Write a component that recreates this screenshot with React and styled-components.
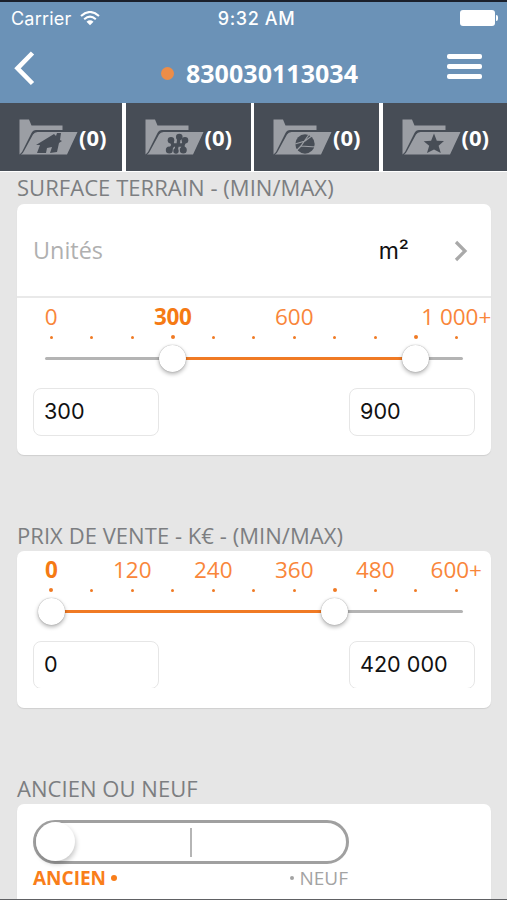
import { useState } from "react";
import styled, { createGlobalStyle } from "styled-components";

const tabs = ["house", "people", "ball", "star"];

const surfaceLabels = { 0: "0", 3: "300", 6: "600", 10: "1 000+" };
const priceLabels = {
  0: "0",
  2: "120",
  4: "240",
  6: "360",
  8: "480",
  10: "600+",
};

const glyphs = {
  house: (
    <path d="M17 26 L35 15 L37 17 L38 14 L42 14 L41 21 L43 22 L40 24 L38 33 L31 34 L33 28 L28 29 L27 34 L18 34 L21 26 Z" />
  ),
  people: (
    <>
      <circle cx="34.3" cy="18" r="3.3" />
      <circle cx="26" cy="21.3" r="3.3" />
      <circle cx="40" cy="21.3" r="3.3" />
      <circle cx="24.3" cy="31" r="3.5" />
      <circle cx="31" cy="32" r="2.7" />
      <circle cx="38.3" cy="31" r="3.5" />
      <path
        d="M34 18 L33 27 M26 21 L28 26 L25 31 M40 21 L38 26 L38 31 M28 26 H37 M32 27 L31 32"
        fill="none"
        stroke="#474d56"
        strokeWidth="3.4"
      />
    </>
  ),
  ball: (
    <>
      <circle cx="32" cy="25" r="9.7" />
      <path
        d="M22 25 L32 22 L40 16 M37 14 L28 27 L43 28 M28 27 L23 32"
        fill="none"
        stroke="#9b9ea4"
        strokeWidth="1.2"
      />
    </>
  ),
  star: (
    <path d="M32 14.5 L34.8 21.7 L42 22 L36.6 26.7 L38.8 34 L32 30.4 L25 34 L27.2 26.7 L21.7 22.3 L29.1 21.7 Z" />
  ),
};

function FolderIcon({ name }) {
  return (
    <svg width="60" height="37" viewBox="0 0 60 37" fill="#474d56">
      <path
        d="M0.5 0.5 H10 L12.5 6.5 H43.5 V11 H17 Q14 11 12.5 14 L3 33 L0.5 35.5 Z"
        fill="#9b9ea4"
      />
      <path
        d="M18.5 13 H58.5 L48 35.5 H2 Q4 34.5 5 32 L14 15.5 Q15.5 13 18.5 13 Z"
        fill="#9b9ea4"
      />
      {glyphs[name]}
    </svg>
  );
}

function Range({ labels, from, to, minValue, maxValue, openInputs }) {
  const ticks = Array.from({ length: 11 }, (_, i) => i);
  return (
    <RangeWrapper>
      <Scale>
        {ticks.map((i) => (
          <ScaleStep key={i}>
            <ScaleLabel $active={i === from}>{labels[i]}</ScaleLabel>
            <Tick $active={i === from || i === to} />
          </ScaleStep>
        ))}
      </Scale>
      <Track>
        <Fill $from={from} $to={to} />
        <Handle $step={from} />
        <Handle $step={to} />
      </Track>
      <Inputs>
        <Input defaultValue={minValue} $open={openInputs} />
        <Input defaultValue={maxValue} $open={openInputs} />
      </Inputs>
    </RangeWrapper>
  );
}

function App() {
  const [isNew, setIsNew] = useState(false);

  return (
    <MainContainer>
      <GlobalStyle />
      <Header>
        <StatusBar>
          <Carrier>
            Carrier
            <svg width="20" height="15" viewBox="0 0 20 15" fill="none">
              <path
                d="M1 5 Q10 -3 19 5 M4.2 8.2 Q10 3.2 15.8 8.2"
                stroke="#fff"
                strokeWidth="2.1"
              />
              <path d="M6.5 10.7 Q10 8 13.5 10.7 L10 14.3 Z" fill="#fff" />
            </svg>
          </Carrier>
          <Clock>9:32 AM</Clock>
          <BatteryWrapper>
            <Battery />
            <BatteryTip />
          </BatteryWrapper>
        </StatusBar>
        <Nav>
          <svg width="22" height="36" viewBox="0 0 22 36" fill="none">
            <path d="M19.5 2 L4.5 17.3 L19.5 32.5" stroke="#fff" strokeWidth="4.6" />
          </svg>
          <Title>
            <Dot />
            830030113034
          </Title>
          <Burger>
            <BurgerLine />
            <BurgerLine />
            <BurgerLine />
          </Burger>
        </Nav>
      </Header>

      <Tabs>
        {tabs.map((name) => (
          <Tab key={name}>
            <FolderIcon name={name} />
            <Count>(0)</Count>
          </Tab>
        ))}
      </Tabs>

      <Section>
        <SectionTitle $first>SURFACE TERRAIN - (MIN/MAX)</SectionTitle>
        <Card>
          <UnitRow>
            <UnitName>Unités</UnitName>
            <UnitValue>m²</UnitValue>
            <Chevron width="14" height="22" viewBox="0 0 14 22" fill="none">
              <path d="M2 2 L11 11 L2 20" stroke="#a9a9a9" strokeWidth="3.2" />
            </Chevron>
          </UnitRow>
          <Range
            labels={surfaceLabels}
            from={3}
            to={9}
            minValue="300"
            maxValue="900"
          />
        </Card>
      </Section>

      <Section>
        <SectionTitle>PRIX DE VENTE - K€ - (MIN/MAX)</SectionTitle>
        <Card>
          <Range
            labels={priceLabels}
            from={0}
            to={7}
            minValue="0"
            maxValue="420 000"
            openInputs
          />
        </Card>
      </Section>

      <Section>
        <SectionTitle>ANCIEN OU NEUF</SectionTitle>
        <Card>
          <SwitchWrapper>
            <Switch onClick={() => setIsNew(!isNew)}>
              <Knob $right={isNew} />
              <Divider />
            </Switch>
            <SwitchLabels>
              <SwitchLabel $active={!isNew}>
                ANCIEN
                <Bullet $size={6} />
              </SwitchLabel>
              <SwitchLabel $active={isNew}>
                <Bullet $size={4} />
                NEUF
              </SwitchLabel>
            </SwitchLabels>
          </SwitchWrapper>
        </Card>
      </Section>
    </MainContainer>
  );
}

export default App;

const GlobalStyle = createGlobalStyle`
  * {
    box-sizing: border-box;
  }
  body {
    margin: 0;
    overflow: hidden;
    font-family: "Open Sans", sans-serif;
  }
`;

const MainContainer = styled.div`
  height: 900px;
  overflow: hidden;
  background: #e6e6e6;
  border-top: 2px solid #1b202b;
  border-bottom: 1px solid #606164;
`;

const Header = styled.header`
  height: 101px;
  background: #6b92b7;
  color: #fff;
`;

const StatusBar = styled.div`
  height: 32px;
  padding: 0 9px 0 11px;
  display: grid;
  grid-template-columns: 1fr auto 1fr;
  align-items: center;
  font-family: Inter, sans-serif;
  font-size: 18px;
`;

const Carrier = styled.div`
  display: flex;
  align-items: center;
  gap: 9px;
  letter-spacing: 0.2px;
`;

const Clock = styled.div`
  padding-left: 4px;
  font-weight: 500;
  letter-spacing: 0.6px;
`;

const BatteryWrapper = styled.div`
  display: flex;
  align-items: center;
  justify-content: flex-end;
  gap: 1px;
`;

const Battery = styled.div`
  width: 35px;
  height: 16px;
  border-radius: 3px;
  background: #fff;
`;

const BatteryTip = styled.div`
  width: 2px;
  height: 6px;
  border-radius: 0 2px 2px 0;
  background: #fff;
`;

const Nav = styled.nav`
  height: 69px;
  padding: 17px 25px 0 13px;
  display: flex;
  align-items: flex-start;
`;

const Title = styled.h1`
  flex: 1;
  margin: 5px 0 0 37px;
  display: flex;
  align-items: center;
  justify-content: center;
  gap: 12px;
  font-size: 25px;
  line-height: 34px;
  font-weight: 700;
  letter-spacing: 0.05px;
`;

const Dot = styled.span`
  width: 13px;
  height: 13px;
  border-radius: 50%;
  background: #ed8d48;
`;

const Burger = styled.div`
  padding-top: 3px;
  display: flex;
  flex-direction: column;
  gap: 5px;
`;

const BurgerLine = styled.span`
  width: 35px;
  height: 5px;
  border-radius: 2px;
  background: #fff;
`;

const Tabs = styled.div`
  height: 69px;
  display: grid;
  grid-template-columns: 122px 125px 125px 1fr;
  column-gap: 3.5px;
  background: #fff;
  border-bottom: 1px solid #fff;
`;

const Tab = styled.div`
  padding: 16px 0 0 19px;
  display: flex;
  align-items: flex-start;
  background: #474d56;
`;

const Count = styled.span`
  margin-top: 3px;
  color: #fff;
  font-size: 22px;
  line-height: 31px;
  font-weight: 700;
`;

const Section = styled.section`
  margin-bottom: 64px;
  padding: 0 16px 0 17px;
`;

const SectionTitle = styled.h2`
  margin: 0;
  height: 32px;
  color: #7c7e81;
  font-size: 22px;
  line-height: ${({ $first }) => ($first ? 31 : 33)}px;
  font-weight: 400;
  letter-spacing: 0.05px;
  white-space: nowrap;
`;

const Card = styled.div`
  background: #fff;
  border-radius: 7px;
  box-shadow: 0 1px 1px rgba(0, 0, 0, 0.1);
`;

const UnitRow = styled.div`
  height: 94px;
  padding: 0 23px 0 16px;
  display: flex;
  align-items: center;
  border-bottom: 2px solid #e9e9e9;
`;

const UnitName = styled.span`
  flex: 1;
  color: #b0b0b0;
  font-size: 23.4px;
`;

const UnitValue = styled.span`
  margin-right: 45px;
  padding-top: 2px;
  color: #111;
  font-family: Inter, sans-serif;
  font-size: 23px;
`;

const Chevron = styled.svg`
  margin-top: 2px;
`;

const RangeWrapper = styled.div`
  height: 157px;
`;

const Scale = styled.div`
  height: 47px;
  padding-left: 14px;
  display: grid;
  grid-template-columns: repeat(11, 40.5px);
`;

const ScaleStep = styled.div`
  display: flex;
  flex-direction: column;
  align-items: center;
`;

const ScaleLabel = styled.span`
  height: 36px;
  color: ${({ $active }) => ($active ? "#f57a14" : "#f9863a")};
  font-size: 22.5px;
  line-height: 37px;
  font-weight: ${({ $active }) => ($active ? 700 : 400)};
  letter-spacing: ${({ $active }) => ($active ? "-0.3px" : "0")};
  white-space: nowrap;
`;

const Tick = styled.span`
  width: ${({ $active }) => ($active ? 4 : 3)}px;
  height: ${({ $active }) => ($active ? 4 : 3)}px;
  margin-top: ${({ $active }) => ($active ? 1 : 2)}px;
  border-radius: 50%;
  background: #f07a24;
`;

const Track = styled.div`
  position: relative;
  width: 418px;
  height: 3px;
  margin: 12px 0 0 28px;
  border-radius: 2px;
  background: #b4b4b4;
`;

const Fill = styled.div`
  position: absolute;
  top: 0;
  left: ${({ $from }) => 6 + $from * 40.5}px;
  width: ${({ $from, $to }) => ($to - $from) * 40.5}px;
  height: 3px;
  background: #f07a24;
`;

const Handle = styled.div`
  position: absolute;
  top: -12px;
  left: ${({ $step }) => $step * 40.5 - 7.5}px;
  width: 27px;
  height: 27px;
  border-radius: 50%;
  background: #fff;
  box-shadow: 0 2px 4px rgba(0, 0, 0, 0.3), 0 0 1px rgba(0, 0, 0, 0.4);
`;

const Inputs = styled.div`
  padding: 28px 16px 0;
  display: flex;
  justify-content: space-between;
`;

const Input = styled.input`
  width: 126px;
  height: 48px;
  padding: 0 10px 2px;
  border: 1px solid #e6e6e6;
  border-radius: 8px;
  /* the second card hides the bottom edge of its fields */
  ${({ $open }) => ($open ? "clip-path: inset(0 0 1px 0);" : "")}
  outline: none;
  background: #fff;
  color: #111;
  font-family: Inter, sans-serif;
  font-size: 21.6px;
`;

const SwitchWrapper = styled.div`
  height: 120px;
  padding: 16px;
`;

const Switch = styled.div`
  position: relative;
  width: 316px;
  height: 44px;
  border: 3px solid #a0a0a0;
  border-radius: 22px;
  display: flex;
  align-items: center;
  justify-content: center;
`;

const Knob = styled.div`
  position: absolute;
  top: -1px;
  left: ${({ $right }) => ($right ? 271 : 0)}px;
  width: 39px;
  height: 39px;
  border-radius: 50%;
  background: #fff;
  box-shadow: 1px 3px 5px rgba(0, 0, 0, 0.22);
`;

const Divider = styled.span`
  width: 2px;
  height: 29px;
  background: #b5b5b5;
`;

const SwitchLabels = styled.div`
  width: 315px;
  display: flex;
  justify-content: space-between;
`;

const SwitchLabel = styled.span`
  display: flex;
  align-items: center;
  gap: 5px;
  color: ${({ $active }) => ($active ? "#f97e1a" : "#a3a3a3")};
  font-size: 19px;
  line-height: 28px;
  font-weight: ${({ $active }) => ($active ? 700 : 400)};
`;

const Bullet = styled.i`
  width: ${({ $size }) => $size}px;
  height: ${({ $size }) => $size}px;
  border-radius: 50%;
  background: currentColor;
`;
